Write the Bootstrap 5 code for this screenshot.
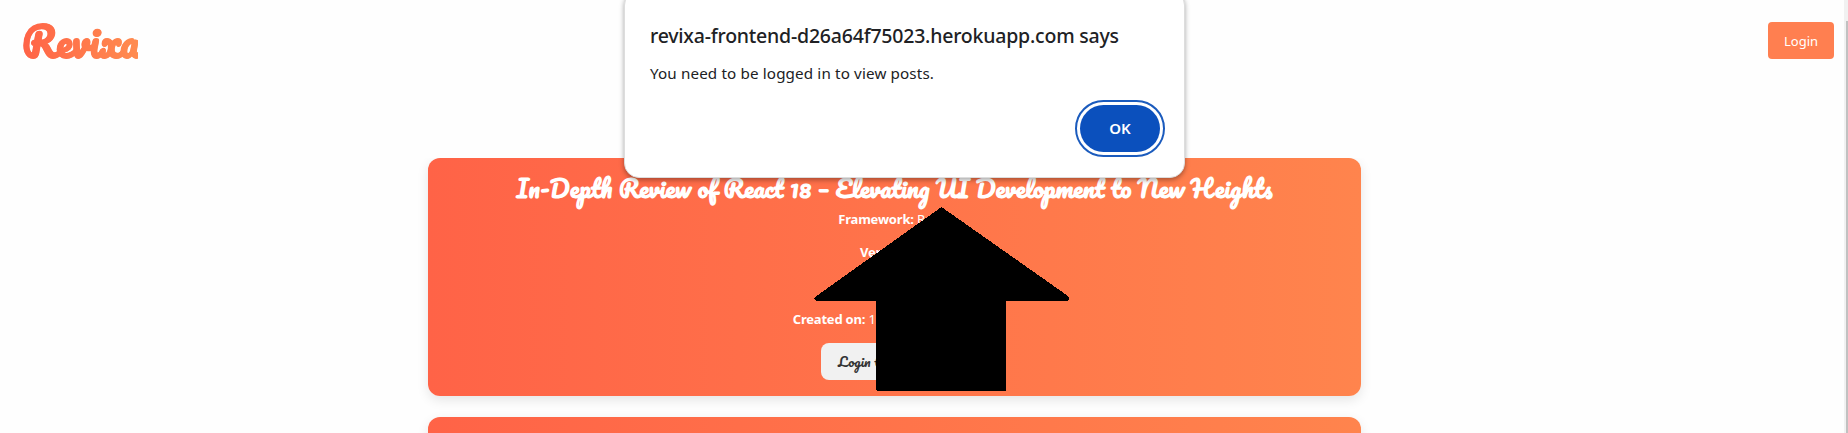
<!DOCTYPE html>
<html lang="en">
<head>
<meta charset="utf-8">
<meta name="viewport" content="width=device-width, initial-scale=1">
<title>Revixa</title>
<link href="https://cdn.jsdelivr.net/npm/bootstrap@5.3.0/dist/css/bootstrap.min.css" rel="stylesheet">
<style>
html,body{overflow:hidden}
body{font-family:"Noto Sans","Open Sans",sans-serif;background:#fefefe;height:433px}
.script-face{font-family:Pacifico,Lato,sans-serif}
.topbar{height:158px;padding:21px 14px 0 22px}
.brand{font-size:40px;line-height:40px;font-weight:700;letter-spacing:-.2px;background:linear-gradient(90deg,#ff6347,#ff8c50);-webkit-background-clip:text;background-clip:text;color:transparent;-webkit-text-stroke:.6px transparent}
.btn-login{--bs-btn-padding-x:0;--bs-btn-padding-y:0;background:#ff7f50;color:#fff;border:0;border-radius:4px;width:66px;height:37px;font-size:13px;padding-top:2px;margin-top:1px}
.feed{width:933px;height:275px;overflow:hidden;margin-left:408px;padding:0 20px;box-sizing:content-box}
.post{height:238px;border:0;border-radius:12px;margin-bottom:21px;padding-top:13px;background:linear-gradient(90deg,#ff6347,#ff844d);box-shadow:0 4px 12px rgba(0,0,0,.1);color:#fff;font-size:13px}
.post-title{font-size:24px;font-weight:700;line-height:34px;height:39px;white-space:nowrap;margin:0}
.meta{height:33.2px;line-height:18px;margin:0;white-space:nowrap}
.meta strong{letter-spacing:-.2px}
.btn-view{width:147px;height:37px;background:#f1f1f1;color:#333;border:0;border-radius:8px;font-size:13.6px;line-height:20px;padding:0 0 0 17px;text-align:left}
.dialog-box{left:624px;top:-10px;width:561px;height:188px;background:#fff;border-radius:15px;border:1px solid #ddd;box-shadow:0 2px 5px rgba(0,0,0,.35);padding:33px 20px 0 25px;color:#202124}
.dialog-title{font-size:19.5px;line-height:24px;letter-spacing:-.21px;font-weight:500;margin:0;white-space:nowrap}
.dialog-text{font-size:15.2px;line-height:20px;letter-spacing:.14px;margin:15px 0 0;white-space:nowrap}
.btn-ok{width:80px;height:47px;border:0;border-radius:24px;background:#0b50bd;color:#fff;font-size:15px;font-weight:600;outline:2px solid #1b5bbd;outline-offset:3px;margin-top:22px}
.arrow{left:814px;top:206px}
.track{right:0;top:0;width:4px;height:433px;background:#f1f1f1;padding:21px 0 0 2px}
.thumb{background:#c1c1c1}
</style>
</head>
<body>
<nav class="topbar d-flex justify-content-between align-items-start">
  <a class="brand script-face text-decoration-none" href="#">Revixa</a>
  <button class="btn btn-login">Login</button>
</nav>
<main class="feed">
  <article class="card post text-center align-items-center">
    <h2 class="post-title script-face">In-Depth Review of React 18 – Elevating UI Development to New Heights</h2>
    <p class="meta"><strong>Framework:</strong> React</p>
    <p class="meta"><strong>Version:</strong> 18</p>
    <p class="meta"></p>
    <p class="meta"><strong>Created on:</strong> 11/11/2024, 10:11:11</p>
    <button class="btn-view script-face">Login to view post</button>
  </article>
  <article class="card post"></article>
</main>
<svg class="arrow position-absolute" width="256" height="186" viewBox="0 0 256 186" shape-rendering="crispEdges"><path d="M127.5 1 254 90Q257 94 253 95H192V185H65Q62 185 62 182V95H3Q-1 94 1 91Z"/></svg>
<section class="dialog-box position-absolute" role="dialog">
  <h1 class="dialog-title">revixa-frontend-d26a64f75023.herokuapp.com says</h1>
  <p class="dialog-text">You need to be logged in to view posts.</p>
  <div class="d-flex justify-content-end pe-1"><button class="btn-ok">OK</button></div>
</section>
<div class="track position-absolute"><div class="thumb h-100"></div></div>
<script src="https://cdn.jsdelivr.net/npm/bootstrap@5.3.0/dist/js/bootstrap.bundle.min.js"></script>
</body>
</html>
